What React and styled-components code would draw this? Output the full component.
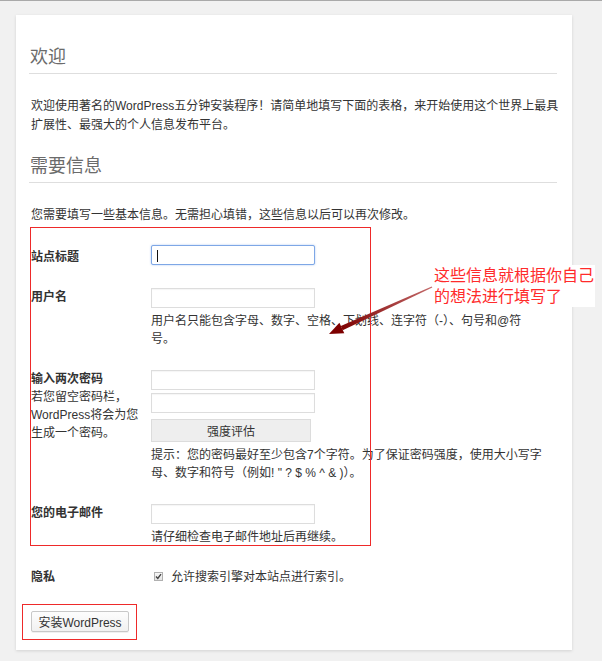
import styled, { createGlobalStyle } from "styled-components";

const GlobalStyle = createGlobalStyle`
  html, body {
    margin: 0;
    padding: 0;
    background: #f1f1f1;
  }
  body {
    font-family: "Liberation Sans", "Noto Sans CJK SC", sans-serif;
    font-size: 12px;
    color: #333;
  }
`;

const Page = styled.div`
  position: relative;
  box-sizing: border-box;
  min-height: 661px;
  border-top: 1px solid #a9a9a9;
  padding: 14px 30px 12px 16px;
`;

const Card = styled.div`
  box-sizing: border-box;
  width: 556px;
  background: #fff;
  box-shadow: 0 1px 3px rgba(0, 0, 0, 0.13);
  padding: 30px 15px 18px 13px;
`;

const Heading = styled.h1`
  margin: ${(p) => (p.$first ? "0" : "19px")} 0 0;
  padding: 0 0 4px 1px;
  font-size: 18px;
  font-weight: normal;
  line-height: 24px;
  color: #6b6b6b;
  border-bottom: 1px solid #dedede;
`;

const Para = styled.p`
  margin: 23px -8px 0 0;
  padding-left: 2px;
  line-height: 19px;
`;

const FormTable = styled.div`
  position: relative;
  margin-top: 9px;
`;

const Row = styled.div`
  display: grid;
  grid-template-columns: 122px 1fr;
`;

const Label = styled.div`
  padding: ${(p) => p.$top ?? 11}px 10px 11px 2px;
  line-height: 18px;
`;

const LabelTitle = styled.div`
  font-weight: bold;
  color: #333;
`;

const Field = styled.div`
  padding: 11px 14px 11px 0;
`;

const InputWrap = styled.div`
  position: relative;
  width: 164px;
`;

const TextInput = styled.input`
  display: block;
  box-sizing: border-box;
  width: 164px;
  height: 20px;
  margin: ${(p) => p.$gap || 0}px 0 0;
  padding: 0 5px;
  border: 1px solid ${(p) => (p.$focus ? "#7ea7e6" : "#dddddd")};
  border-radius: ${(p) => (p.$focus ? "2px" : "0")};
  box-shadow: ${(p) =>
    p.$focus ? "0 0 2px rgba(80, 140, 230, 0.5)" : "inset 0 1px 1px rgba(0,0,0,0.04)"};
  background: #fff;
  outline: none;
  font: inherit;
`;

const Caret = styled.span`
  position: absolute;
  left: 6px;
  top: 5px;
  width: 1px;
  height: 12px;
  background: #111;
`;

const Help = styled.div`
  margin-top: 4px;
  line-height: 18px;
`;

const StrengthButton = styled.button`
  display: block;
  box-sizing: border-box;
  width: 160px;
  height: 23px;
  margin-top: 6px;
  border: 1px solid #dcdcdc;
  background: #eeeeee;
  color: #333;
  font: inherit;
  font-size: 12px;
  padding: 0;
`;

const CheckRow = styled.div`
  display: flex;
  align-items: center;
  gap: 8px;
  padding-left: 3px;
  line-height: 18px;
`;

const CheckBox = styled.span`
  box-sizing: border-box;
  display: inline-flex;
  align-items: center;
  justify-content: center;
  width: 9px;
  height: 9px;
  margin-top: -2px;
  border: 1px solid #b0b0b0;
  background: linear-gradient(#f8f8f8, #e4e4e4);
`;

const Submit = styled.div`
  padding-top: 14px;
`;

const ButtonWrap = styled.div`
  position: relative;
  display: inline-block;
  margin-left: 2px;
`;

const InstallButton = styled.button`
  display: block;
  box-sizing: border-box;
  width: 98px;
  height: 21px;
  padding: 0;
  border: 1px solid #c8c8c8;
  border-radius: 2px;
  background: linear-gradient(#fdfdfd, #f1f1f1);
  box-shadow: 0 1px 0 rgba(0, 0, 0, 0.06);
  color: #333;
  font: inherit;
  font-size: 12px;
`;

const RedFrame = styled.span`
  position: absolute;
  box-sizing: border-box;
  border: 1px solid #ee2a2a;
  pointer-events: none;
`;

const Note = styled.div`
  position: absolute;
  left: 433px;
  top: 264px;
  padding: 0 1px;
  background: #fff;
  color: #ff2b2b;
  font-size: 16px;
  line-height: 21px;
`;

const Arrow = styled.svg`
  position: absolute;
  left: 320px;
  top: 279px;
`;

export default function App() {
  return (
    <>
      <GlobalStyle />
      <Page>
        <Card>
          <Heading $first>欢迎</Heading>
          <Para>
            欢迎使用著名的WordPress五分钟安装程序！请简单地填写下面的表格，来开始使用这个世界上最具扩展性、最强大的个人信息发布平台。
          </Para>

          <Heading>需要信息</Heading>
          <Para>您需要填写一些基本信息。无需担心填错，这些信息以后可以再次修改。</Para>

          <FormTable>
            <Row>
              <Label $top={14}>
                <LabelTitle>站点标题</LabelTitle>
              </Label>
              <Field>
                <InputWrap>
                  <TextInput $focus type="text" />
                  <Caret />
                </InputWrap>
              </Field>
            </Row>
            <Row>
              <Label>
                <LabelTitle>用户名</LabelTitle>
              </Label>
              <Field>
                <TextInput type="text" />
                <Help>用户名只能包含字母、数字、空格、下划线、连字符（-）、句号和@符号。</Help>
              </Field>
            </Row>
            <Row>
              <Label>
                <LabelTitle>输入两次密码</LabelTitle>
                若您留空密码栏，WordPress将会为您生成一个密码。
              </Label>
              <Field>
                <TextInput type="password" />
                <TextInput type="password" $gap={3} />
                <StrengthButton type="button">强度评估</StrengthButton>
                <Help>
                  提示：您的密码最好至少包含7个字符。为了保证密码强度，使用大小写字母、数字和符号（例如! " ? $ % ^ &amp; )）。
                </Help>
              </Field>
            </Row>
            <Row>
              <Label>
                <LabelTitle>您的电子邮件</LabelTitle>
              </Label>
              <Field>
                <TextInput type="text" />
                <Help>请仔细检查电子邮件地址后再继续。</Help>
              </Field>
            </Row>
            <Row>
              <Label>
                <LabelTitle>隐私</LabelTitle>
              </Label>
              <Field>
                <CheckRow>
                  <CheckBox>
                    <svg width="7" height="7" viewBox="0 0 7 7">
                      <path d="M1 3.6 L2.8 5.4 L6 1.2" fill="none" stroke="#444" strokeWidth="1.4" />
                    </svg>
                  </CheckBox>
                  允许搜索引擎对本站点进行索引。
                </CheckRow>
              </Field>
            </Row>
            <RedFrame style={{ top: -7, left: 1, width: 341, height: 319 }} />
          </FormTable>

          <Submit>
            <ButtonWrap>
              <InstallButton type="button">安装WordPress</InstallButton>
              <RedFrame style={{ top: -7, left: -9, right: -8, bottom: -8 }} />
            </ButtonWrap>
          </Submit>
        </Card>

        <Arrow width="120" height="62" viewBox="0 0 120 62">
          <defs>
            <linearGradient id="shaft" x1="1" y1="0" x2="0" y2="1">
              <stop offset="0" stopColor="#c46a6a" />
              <stop offset="1" stopColor="#7d0000" />
            </linearGradient>
          </defs>
          <polygon points="112.3,7.6 22.7,50.3 20.8,46 111.7,6.4" fill="url(#shaft)" />
          <polygon points="9,54 24.3,53.2 19.4,42.8" fill="#7d0000" />
        </Arrow>
        <Note>
          这些信息就根据你自己
          <br />
          的想法进行填写了
        </Note>
      </Page>
    </>
  );
}
